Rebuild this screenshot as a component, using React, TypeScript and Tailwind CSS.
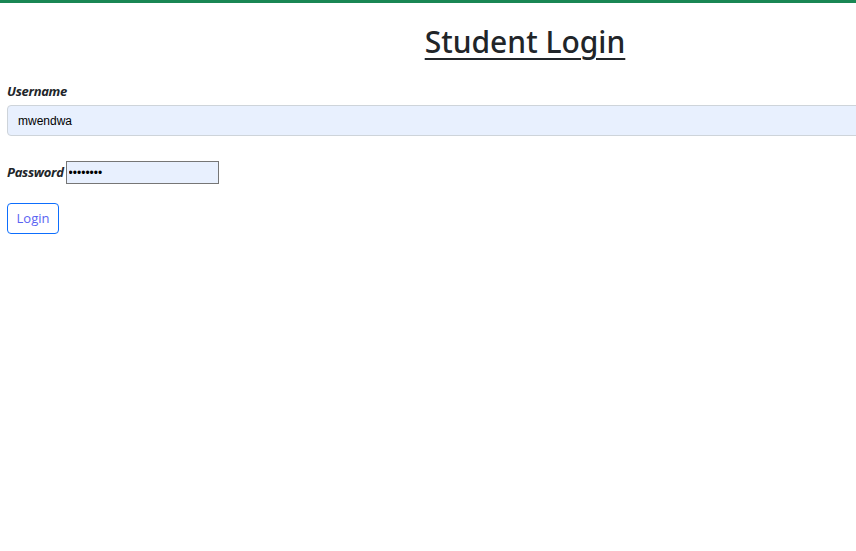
export default function App() {
  return (
    <div className="w-[856px] h-[551px] overflow-hidden bg-white border-t-[3px] border-[#198754]">
      <div className="w-[1050px] px-[7px] font-['Open_Sans',sans-serif] text-[#212529]">
        <h1 className="text-center font-['Noto_Sans',sans-serif] text-[30px] font-medium leading-[40px] underline underline-offset-[5px] decoration-[2px] mt-[19px] mb-[19px]">
          Student Login
        </h1>
        <form className="flex flex-col">
          <label className="text-[13px] leading-[20px] font-bold italic mb-[4px] tracking-[-0.3px]">Username</label>
          <input
            type="text"
            defaultValue="mwendwa"
            className="h-[31px] w-full rounded-[4px] border border-[#ced4da] bg-[#e8f0fe] px-[10px] text-[12px] font-['Liberation_Sans',sans-serif] text-black outline-none"
          />
          <div className="mt-[25px] flex items-center gap-[2px]">
            <label className="text-[13px] font-bold italic tracking-[-0.3px]">Password</label>
            <input
              type="password"
              defaultValue="password"
              className="h-[23px] w-[153px] border border-[#767676] bg-[#e8f0fe] px-[2px] text-[12px] font-['Liberation_Sans',sans-serif] text-black outline-none"
            />
          </div>
          <div className="mt-[19px]">
            <button
              type="button"
              className="h-[31px] w-[52px] rounded-[4px] border border-[#0d6efd] text-[13px] text-[#5a63f2]"
            >
              Login
            </button>
          </div>
        </form>
      </div>
    </div>
  );
}
